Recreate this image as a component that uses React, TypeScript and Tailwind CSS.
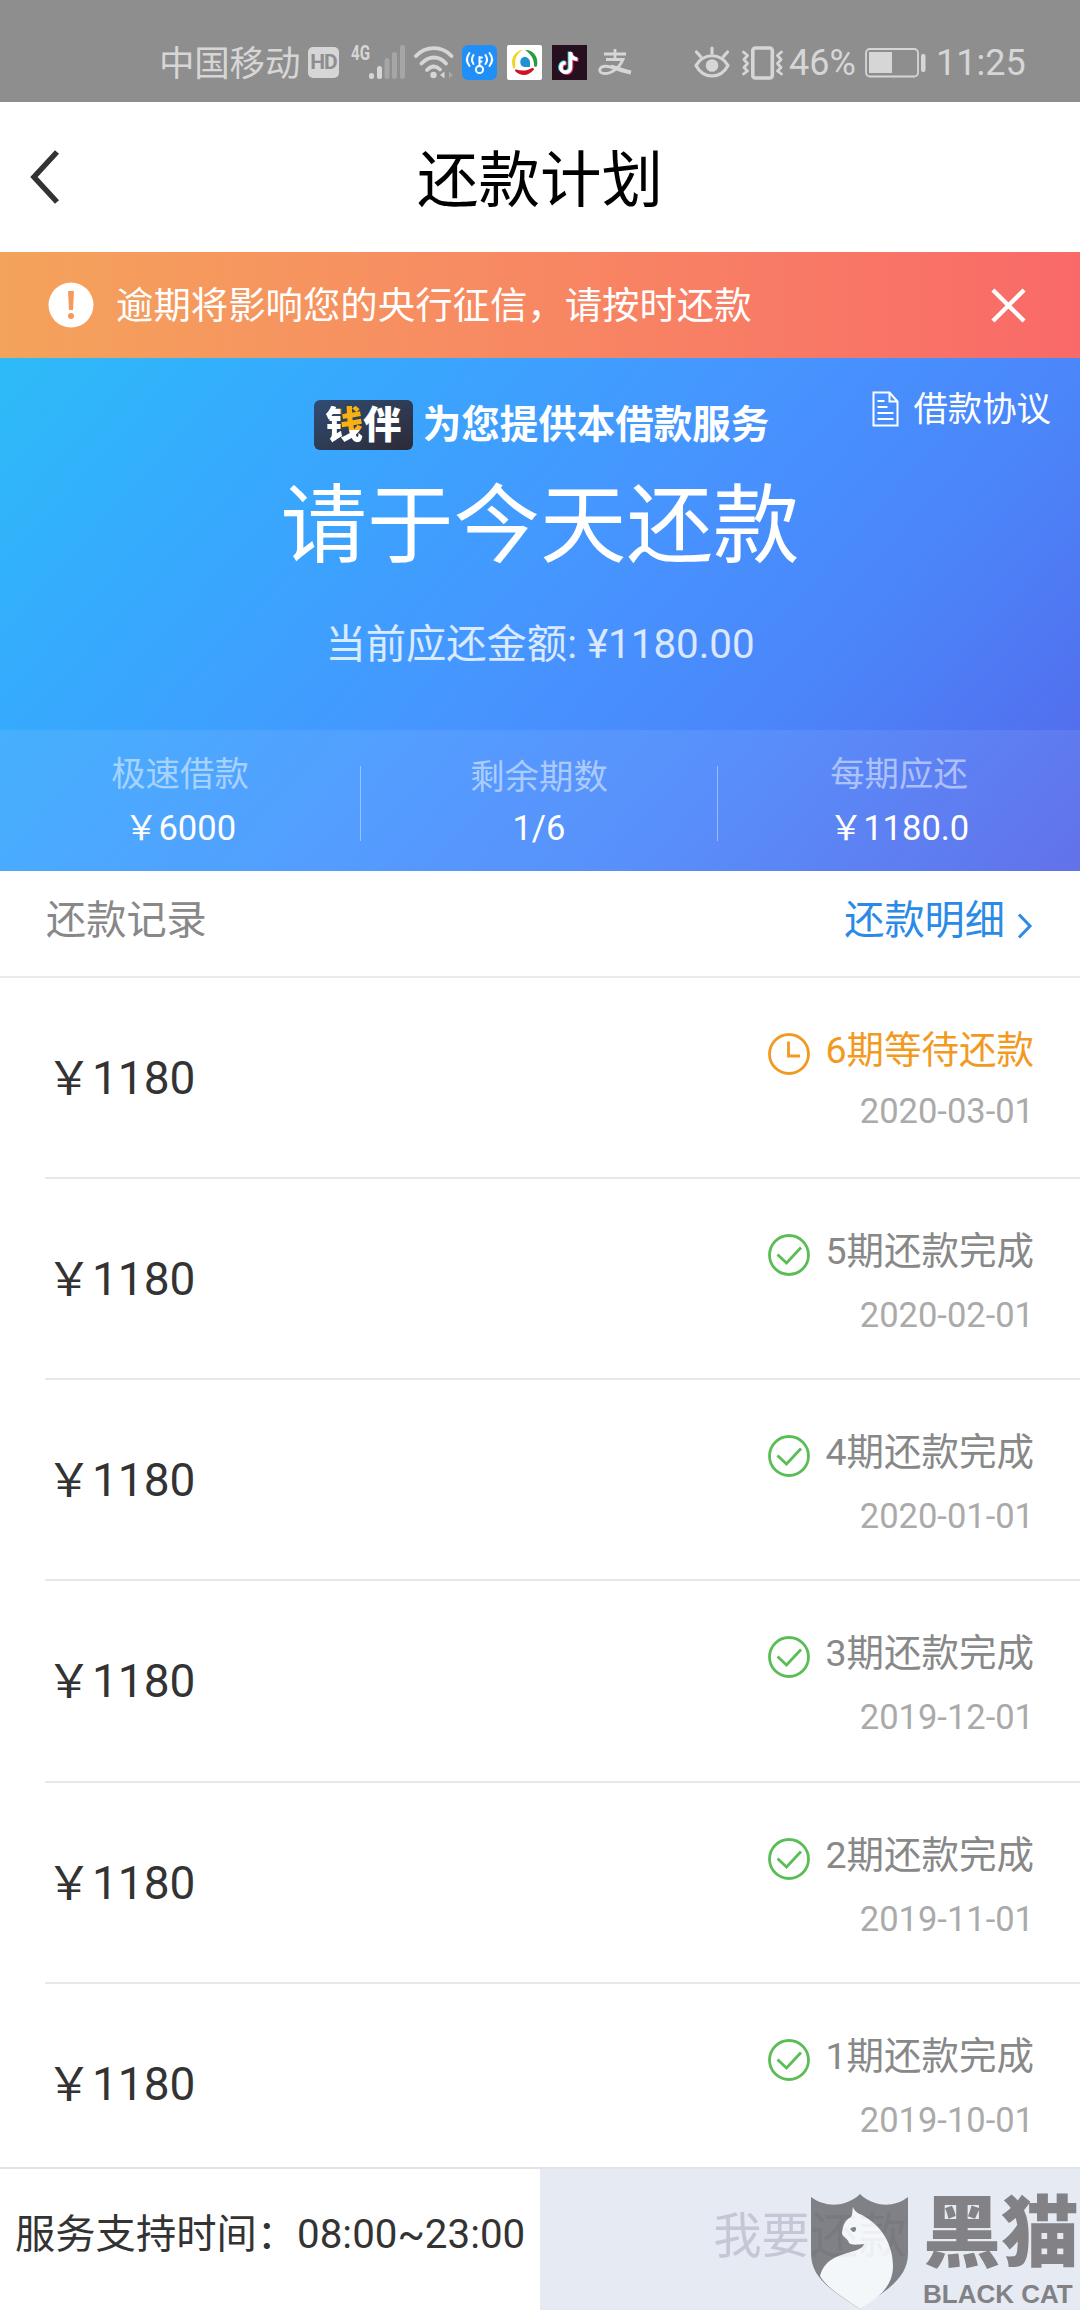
import type { ReactNode } from 'react';

type RecordItem = {
  term: number;
  label: string;
  date: string;
  done: boolean;
  height: string;
};

const records: RecordItem[] = [
  { term: 6, label: '期等待还款', date: '2020-03-01', done: false, height: 'h-[201px]' },
  { term: 5, label: '期还款完成', date: '2020-02-01', done: true, height: 'h-[201px]' },
  { term: 4, label: '期还款完成', date: '2020-01-01', done: true, height: 'h-[201px]' },
  { term: 3, label: '期还款完成', date: '2019-12-01', done: true, height: 'h-[202px]' },
  { term: 2, label: '期还款完成', date: '2019-11-01', done: true, height: 'h-[201px]' },
  { term: 1, label: '期还款完成', date: '2019-10-01', done: true, height: 'h-[183px]' },
];

function SignalIcon() {
  return (
    <svg className="-mt-[8px]" width="57" height="44" viewBox="0 -8 57 44" fill="#d6d6d6">
      <text x="0" y="15" fontSize="20" fontWeight="700" fontFamily="Roboto" textLength="19" lengthAdjust="spacingAndGlyphs">
        4G
      </text>
      <rect x="18" y="28" width="5" height="6" rx="2.5" />
      <rect x="26" y="21" width="5" height="13" rx="2.5" />
      <g fill="#a6a6a6">
        <rect x="33.500" y="13" width="5" height="21" rx="2.500" />
        <rect x="41" y="7" width="5" height="27" rx="2.500" />
        <rect x="49" y="0" width="5" height="34" rx="2.500" />
      </g>
    </svg>
  );
}

function WifiIcon() {
  return (
    <svg width="40" height="34" viewBox="0 0 40 34" fill="none" stroke="#d6d6d6" strokeWidth="3.800" strokeLinecap="round">
      <path d="M2 10C12 -.5 28 -.5 37.500 10" />
      <path d="M7.500 17.500C15 9.500 25 9.500 32 17.500" />
      <path d="M13 24C17.500 19.500 22 19.500 26 23.500" />
      <circle cx="19.500" cy="29" r="3.200" fill="#d6d6d6" stroke="none" />
      <path d="M30.500 25.500v7l-4.500-3.500z" fill="#d6d6d6" stroke="none" />
      <path d="M35 25.500v7l4-3.500z" fill="#a5a9ad" stroke="none" />
    </svg>
  );
}

function WifiKeyIcon() {
  return (
    <svg width="35" height="35" viewBox="0 0 35 35" fill="none" stroke="#fff" strokeWidth="2" strokeLinecap="round">
      <rect width="35" height="35" rx="6" fill="#2090f8" stroke="none" />
      <circle cx="17.500" cy="24.500" r="3.600" />
      <path d="M17.500 20.500V12M17.500 12.500h2.500M17.500 16.500h2" />
      <path d="M11.500 10c-2 3-2 6 0 9M7.500 8c-3.200 4-3.200 9 0 13M23.500 10c2 3 2 6 0 9M27.500 8c3.200 4 3.200 9 0 13" />
    </svg>
  );
}

function BrowserIcon() {
  return (
    <svg width="35" height="35" viewBox="0 0 35 35">
      <rect width="35" height="35" rx="2" fill="#fff" />
      <path d="M17.500 11.800a5.500 5.500 0 0 1 5.500 5.500v4.700h-5.500a5.200 5.200 0 0 1 0-10.200z" fill="#1f92d0" />
      <path d="M16 4.500C7 6 2.500 15 6.500 23.500c1 .5 2-.5 1.700-2C7.500 13 9.500 9 16 4.500z" fill="#f2d21b" />
      <path d="M18 5c8-.5 14 7 12 16-1.500 1.500-3 1-3-1 0-6-3-11-9-15z" fill="#2a9b3e" />
      <path d="M8 26c6 6 14 5 19-1.500 0-1.500-1-2-2.500-1.200-5 2.700-10 3-16 1z" fill="#cf1322" />
    </svg>
  );
}

function TiktokIcon() {
  const note = 'M18.500 7v15.500a4.800 4.800 0 1 1-4.800-4.800M18.500 8c.5 4 3 6 7 6.200';
  return (
    <svg width="35" height="35" viewBox="0 0 35 35" fill="none" strokeWidth="3.600">
      <rect width="35" height="35" fill="#26101f" />
      <path d={note} stroke="#35e5e2" transform="translate(-1 -.6)" />
      <path d={note} stroke="#f5315a" transform="translate(1 .8)" />
      <path d={note} stroke="#fff" />
    </svg>
  );
}

function EyeIcon() {
  return (
    <svg width="36" height="33" viewBox="0 0 36 33" fill="none" stroke="#d6d6d6" strokeWidth="3.200" strokeLinecap="round">
      <path d="M2 19.500C9.500 6.500 26.500 6.500 34 19.500 26.500 33.500 9.500 33.500 2 19.500z" />
      <circle cx="18" cy="19.500" r="6.300" fill="#d6d6d6" stroke="none" />
      <path d="M18 7V2M6.500 10.500 2.500 6M29.500 10.500l4-4.500" />
    </svg>
  );
}

function VibrateIcon() {
  return (
    <svg width="43" height="34" viewBox="0 0 43 34" fill="none" stroke="#d6d6d6" strokeWidth="3.600" strokeLinecap="round" strokeLinejoin="round">
      <rect x="11.800" y="2" width="19.500" height="30" rx="2.500" />
      <path d="M2.500 6l4 3.500-3.500 4 3.500 4-3.500 4 3.500 3.500-4 3M40.500 6l-4 3.500 3.500 4-3.500 4 3.500 4-3.500 3.500 4 3" strokeWidth="2.800" />
    </svg>
  );
}

function BatteryIcon() {
  return (
    <svg width="62" height="30" viewBox="0 0 62 30" fill="#d6d6d6">
      <rect x="1" y="1" width="52" height="27.500" rx="4" fill="none" stroke="#d6d6d6" strokeWidth="1.800" />
      <rect x="4" y="4" width="23" height="21" />
      <rect x="56" y="6" width="4.500" height="18" rx="2" />
    </svg>
  );
}

function StatusBar() {
  return (
    <div className="flex h-[102px] items-center bg-[#8e8e8e] pt-[23px] pl-[159px] text-[#d6d6d6]">
      <span className="mt-[2px] w-[149px] text-[35.500px] leading-[40px] tracking-[-0.200px]">中国移动</span>
      <span className="flex h-[31px] w-[31px] items-center justify-center rounded-[5px] bg-[#d6d6d6] text-[21px] font-bold tracking-[-1px] text-[#8e8e8e]">
        HD
      </span>
      <div className="ml-[12px] flex items-center">
        <SignalIcon />
        <div className="ml-[6px]"><WifiIcon /></div>
        <div className="ml-[8px] flex gap-[10px]">
          <WifiKeyIcon />
          <BrowserIcon />
          <TiktokIcon />
        </div>
      </div>
      {/* Alipay mark */}
      <svg className="ml-[11px]" width="34" height="28" viewBox="0 0 34 28" fill="none" stroke="#d6d6d6" strokeWidth="2.800">
        <path d="M6 5h22M17 0v10.500M8 10.500h17C22 18 14 24.500 7 24.500c-4 0-6-2-5-4.500 1.500-3.500 8-3.500 14-1" />
        <path d="M13 17.500c7 2.500 13 4.500 20 6" strokeWidth="4" />
      </svg>
      <div className="ml-[62px] flex items-center">
        <EyeIcon />
        <div className="ml-[11px]"><VibrateIcon /></div>
        <span className="ml-[5px] w-[76px] text-[36px] leading-[40px]">46%</span>
        <BatteryIcon />
        <span className="ml-[9px] text-[36px] leading-[40px]">11:25</span>
      </div>
    </div>
  );
}

function Header() {
  return (
    <div className="grid h-[150px] grid-cols-[1fr_auto_1fr] items-center bg-white">
      <svg className="ml-[28px]" width="34" height="54" viewBox="0 0 34 54" fill="none" stroke="#333" strokeWidth="5.500">
        <path d="M29 2 6 27l23 25" />
      </svg>
      <h1 className="pt-[8px] text-[61.500px] leading-[80px] text-black">还款计划</h1>
      <span />
    </div>
  );
}

function Notice() {
  return (
    <div className="flex h-[106px] items-center bg-linear-to-r from-[#f4a35b] to-[#f96968] pr-[54px] pl-[48px] text-white">
      <svg width="46" height="46" viewBox="0 0 46 46">
        <circle cx="23" cy="23" r="22.500" fill="#fff" />
        <path d="M20 9h6l-1 19h-4z" fill="#f59a5e" />
        <circle cx="23" cy="34" r="3" fill="#f59a5e" />
      </svg>
      <span className="ml-[22px] flex-1 pt-[2px] text-[37.400px] leading-[50px]">逾期将影响您的央行征信，请按时还款</span>
      <svg width="35" height="35" viewBox="0 0 36 36" stroke="#fff" strokeWidth="4.500">
        <path d="M2 2l32 32M34 2 2 34" />
      </svg>
    </div>
  );
}

function BrandBadge() {
  return (
    <span className="flex h-[50px] w-[99px] items-center justify-center rounded-[6px] bg-linear-to-br from-[#2f4d74] to-[#2b2a36] text-[38px] leading-[38px] font-black text-white">
      <span className="bg-white bg-[linear-gradient(#f9b013,#f9b013)] bg-[length:60%_64%] bg-[position:100%_0] bg-clip-text bg-no-repeat text-transparent">
        钱
      </span>
      伴
    </span>
  );
}

function Stat({ label, value, className }: { label: string; value: string; className: string }) {
  return (
    <div className={`flex flex-col items-center ${className}`}>
      <span className="text-[34.400px] leading-[44px] text-white/50">{label}</span>
      <span className="text-[34.500px] leading-[44px] text-white">{value}</span>
    </div>
  );
}

function Summary() {
  return (
    <div className="relative flex h-[513px] flex-col bg-linear-[132deg,#2dbbf8_0%,#36aafd_22%,#4695ff_50%,#4b85fa_72%,#5566e9_100%] text-white">
      <div className="absolute top-[26px] right-[29px] flex items-center">
        <svg width="27" height="36" viewBox="0 0 27 36" fill="none" stroke="#fff" strokeWidth="2">
          <path d="M1.500 1.500h16l8 9v24h-24zM17.500 1.500v9h8" />
          <path d="M5.500 10h7M5.500 16h10M5.500 22h16M5.500 28h16" />
        </svg>
        <span className="ml-[14px] text-[34.400px] leading-[50px]">借款协议</span>
      </div>
      <div className="flex h-[134px] items-center justify-center pl-[3px]">
        <BrandBadge />
        <span className="ml-[10px] text-[38.500px] leading-[50px] font-bold">为您提供本借款服务</span>
      </div>
      <div className="-mt-[20px] text-center text-[86.500px] leading-[110px]">请于今天还款</div>
      <div className="mt-[36px] text-center text-[40.300px] leading-[54px] text-white/80">当前应还金额: ¥1180.00</div>
      <div className="mt-auto flex h-[141px] bg-white/8 pt-[22px]">
        <Stat label="极速借款" value="￥6000" className="w-[360px] gap-[10px]" />
        <div className="mt-[14px] h-[75px] w-px bg-white/40" />
        <Stat label="剩余期数" value="1/6" className="w-[356px] gap-[7px] pt-[3px]" />
        <div className="mt-[14px] h-[75px] w-px bg-white/40" />
        <Stat label="每期应还" value="￥1180.0" className="flex-1 gap-[10px]" />
      </div>
    </div>
  );
}

function StatusIcon({ done }: { done: boolean }): ReactNode {
  return (
    <svg width="42" height="42" viewBox="0 0 42 42" fill="none" stroke={done ? '#5bbd55' : '#f29a1f'} strokeWidth="2.800">
      <circle cx="21" cy="21" r="19.500" />
      {done ? <path d="M9.500 20.500 18.500 29 33 13.500" /> : <path d="M20.500 8.500V23h11.500" />}
    </svg>
  );
}

function RecordRow({ item, last }: { item: RecordItem; last: boolean }) {
  return (
    <div className={`ml-[45px] flex shrink-0 justify-between pr-[46px] ${item.height} ${last ? '' : 'border-b-2 border-[#e8e8e8]'}`}>
      <span className="pt-[70px] pl-px text-[46px] leading-[60px] text-[#333]">￥1180</span>
      <div className="flex flex-col items-end pt-[46px]">
        <div className="flex items-center">
          <div className="mt-[9px]"><StatusIcon done={item.done} /></div>
          <span className={`ml-[15px] text-[37.500px] leading-[50px] ${item.done ? 'text-[#888]' : 'text-[#f29a1f]'}`}>
            {item.term}
            {item.label}
          </span>
        </div>
        <span className={`text-[34.500px] leading-[44px] text-[#aaa] ${item.done ? 'mt-[17px]' : 'mt-[14px]'}`}>{item.date}</span>
      </div>
    </div>
  );
}

function Watermark() {
  return (
    <div className="absolute right-0 bottom-0 flex h-[117px] w-[270px] text-[#828286]">
      <svg width="99" height="117" viewBox="0 0 99 117" opacity="0.78">
        <path d="M1 4C17 16 38 13 50 1c12 12 33 15 48 3v56c0 24-18 35-48 56C19 96 1 84 1 60z" fill="#646468" />
        <path d="M43 14c1.500 4 4 6 9 8 19 10 31 29 31 51 0 20-14 32-33 43C34 105 18 96 10 83c5-19 22-21 37-26 4-1.500 6-3 7-6-8 1-13 1-15-1-1-5-7-6-7-10 1-8 3-13 9-16 2-3 1-6 2-10z" fill="#f8fbfd" />
        <path d="M40 36c2-2 5-3 6-1 0 3-1 4-3 4zM48 32l-2 3" fill="#646468" />
      </svg>
      <div className="ml-[14px] flex flex-col">
        <span className="pt-[3px] text-[78px] leading-[78px] font-black whitespace-nowrap">黑猫</span>
        <span className="mt-[6px] font-['Liberation_Sans'] text-[26px] leading-[28px] font-bold whitespace-nowrap">BLACK CAT</span>
      </div>
    </div>
  );
}

function Footer() {
  return (
    <div className="relative flex h-[143px] shrink-0 border-t-2 border-[#e4e4e6]">
      <div className="flex w-[540px] items-center bg-white pb-[10px] pl-[15px] text-[40.300px] leading-[54px] whitespace-nowrap text-[#333]">
        服务支持时间：08:00~23:00
      </div>
      <div className="flex flex-1 items-center justify-center bg-[#e6eaf2] pb-[6px] text-[48.400px] leading-[60px] text-[#c6c6d6]">
        我要还款
      </div>
      <Watermark />
    </div>
  );
}

export default function App() {
  return (
    <div className="flex h-[2310px] w-[1080px] flex-col overflow-hidden bg-white font-[Roboto,'Noto_Sans_CJK_SC',sans-serif]">
      <StatusBar />
      <Header />
      <Notice />
      <Summary />

      {/* Section title */}
      <div className="flex h-[107px] items-center justify-between border-b-2 border-[#ebebeb] pr-[47px] pb-[6px] pl-[46px] text-[40.200px] leading-[54px]">
        <span className="text-[#888]">还款记录</span>
        <a className="flex items-center text-[#2b8ae8]">
          还款明细
          <svg className="mt-[10px] ml-[12px]" width="16" height="26" viewBox="0 0 16 26" fill="none" stroke="#2b8ae8" strokeWidth="3">
            <path d="M2 1.500 13 13 2 24.500" />
          </svg>
        </a>
      </div>

      {/* Repayment history */}
      <div className="flex h-[1189px] flex-col overflow-hidden">
        {records.map((item, i) => (
          <RecordRow key={item.term} item={item} last={i === records.length - 1} />
        ))}
      </div>

      <Footer />
    </div>
  );
}
